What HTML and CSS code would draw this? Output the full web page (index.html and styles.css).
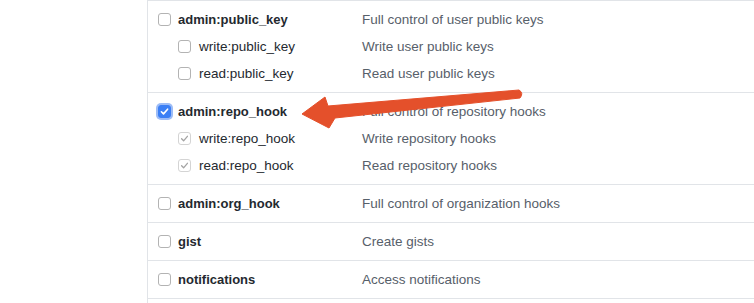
FILE: index.html
```html
<!DOCTYPE html>
<html lang="en">
<head>
  <meta charset="UTF-8">
  <meta name="viewport" content="width=device-width, initial-scale=1.0">
  <title>Token scopes</title>
  <link rel="stylesheet" href="styles.css">
</head>
<body>

<div class="scopes">
  <div class="scope-group">
    <div class="scope-row">
      <div class="scope-label"><span class="check"></span><span class="scope-name main">admin:public_key</span></div>
      <div class="scope-desc">Full control of user public keys</div>
    </div>
    <div class="scope-row sub">
      <div class="scope-label"><span class="check"></span><span class="scope-name">write:public_key</span></div>
      <div class="scope-desc">Write user public keys</div>
    </div>
    <div class="scope-row sub">
      <div class="scope-label"><span class="check"></span><span class="scope-name">read:public_key</span></div>
      <div class="scope-desc">Read user public keys</div>
    </div>
  </div>

  <div class="scope-group">
    <div class="scope-row">
      <div class="scope-label">
        <span class="check checked">
          <svg viewBox="0 0 13 13" width="13" height="13"><path d="M3.4 6.8 L5.5 8.9 L9.6 4.2" fill="none" stroke="#fff" stroke-width="1.6" stroke-linecap="round" stroke-linejoin="round"/></svg>
        </span>
        <span class="scope-name main">admin:repo_hook</span>
      </div>
      <div class="scope-desc">Full control of repository hooks</div>
    </div>
    <div class="scope-row sub">
      <div class="scope-label">
        <span class="check disabled">
          <svg viewBox="0 0 13 13" width="13" height="13"><path d="M3.6 6.8 L5.6 8.8 L9.4 4.3" fill="none" stroke="#a3a3a3" stroke-width="1.3" stroke-linecap="round" stroke-linejoin="round"/></svg>
        </span>
        <span class="scope-name">write:repo_hook</span>
      </div>
      <div class="scope-desc">Write repository hooks</div>
    </div>
    <div class="scope-row sub">
      <div class="scope-label">
        <span class="check disabled">
          <svg viewBox="0 0 13 13" width="13" height="13"><path d="M3.6 6.8 L5.6 8.8 L9.4 4.3" fill="none" stroke="#a3a3a3" stroke-width="1.3" stroke-linecap="round" stroke-linejoin="round"/></svg>
        </span>
        <span class="scope-name">read:repo_hook</span>
      </div>
      <div class="scope-desc">Read repository hooks</div>
    </div>
  </div>

  <div class="scope-group">
    <div class="scope-row">
      <div class="scope-label"><span class="check"></span><span class="scope-name main">admin:org_hook</span></div>
      <div class="scope-desc">Full control of organization hooks</div>
    </div>
  </div>

  <div class="scope-group">
    <div class="scope-row">
      <div class="scope-label"><span class="check"></span><span class="scope-name main">gist</span></div>
      <div class="scope-desc">Create gists</div>
    </div>
  </div>

  <div class="scope-group">
    <div class="scope-row">
      <div class="scope-label"><span class="check"></span><span class="scope-name main">notifications</span></div>
      <div class="scope-desc">Access notifications</div>
    </div>
  </div>

  <div class="scope-group last"></div>
</div>

<!-- annotation arrow drawn over the list -->
<svg class="arrow" width="754" height="303" viewBox="0 0 754 303">
  <path d="M302 114 L325 97 L328 106 L519 90 Q524 93 520 98 L335 118 L329 128 Z" fill="#e4502b" stroke="#e4502b" stroke-width="1" stroke-linejoin="round"/>
</svg>

</body>
</html>
```

FILE: styles.css
```css
body {
  margin: 0;
  height: 303px;
  overflow: hidden;
  background-color: #fff;
  font-family: "Liberation Sans", Arial, sans-serif;
  color: #24292f;
}
.scopes {
  margin-left: 147px;
  border-left: 1px solid #e1e4e8;
  min-height: 303px;
}
.scope-group {
  border-top: 1px solid #e1e4e8;
  padding: 5px 0;
}
.scope-group.last {
  padding: 0;
  height: 10px;
}
.scope-row {
  display: flex;
  align-items: center;
  height: 27px;
}
.scope-label {
  display: flex;
  align-items: center;
  width: 214px;
  padding-left: 10px;
  box-sizing: border-box;
}
.scope-row.sub .scope-label {
  padding-left: 30px;
}
.check {
  display: inline-flex;
  width: 13px;
  height: 13px;
  box-sizing: border-box;
  border: 1px solid #b3b3b3;
  border-radius: 3px;
  background-color: #fff;
  margin-right: 7px;
  flex-shrink: 0;
}
.check svg {
  margin: -1px;
}
.check.checked {
  background-color: #3b7ff5;
  border-color: #3b7ff5;
  box-shadow: 0 0 0 2px #9dbcf6;
}
.check.disabled {
  border-color: #d4d4d4;
}
.scope-row.sub .check {
  margin-right: 8px;
}
.scope-name {
  font-size: 13.5px;
}
.scope-name.main {
  font-size: 13px;
  font-weight: bold;
}
.scope-desc {
  font-size: 13.5px;
  color: #57606a;
}
.arrow {
  position: absolute;
  top: 0;
  left: 0;
  pointer-events: none;
}
```
